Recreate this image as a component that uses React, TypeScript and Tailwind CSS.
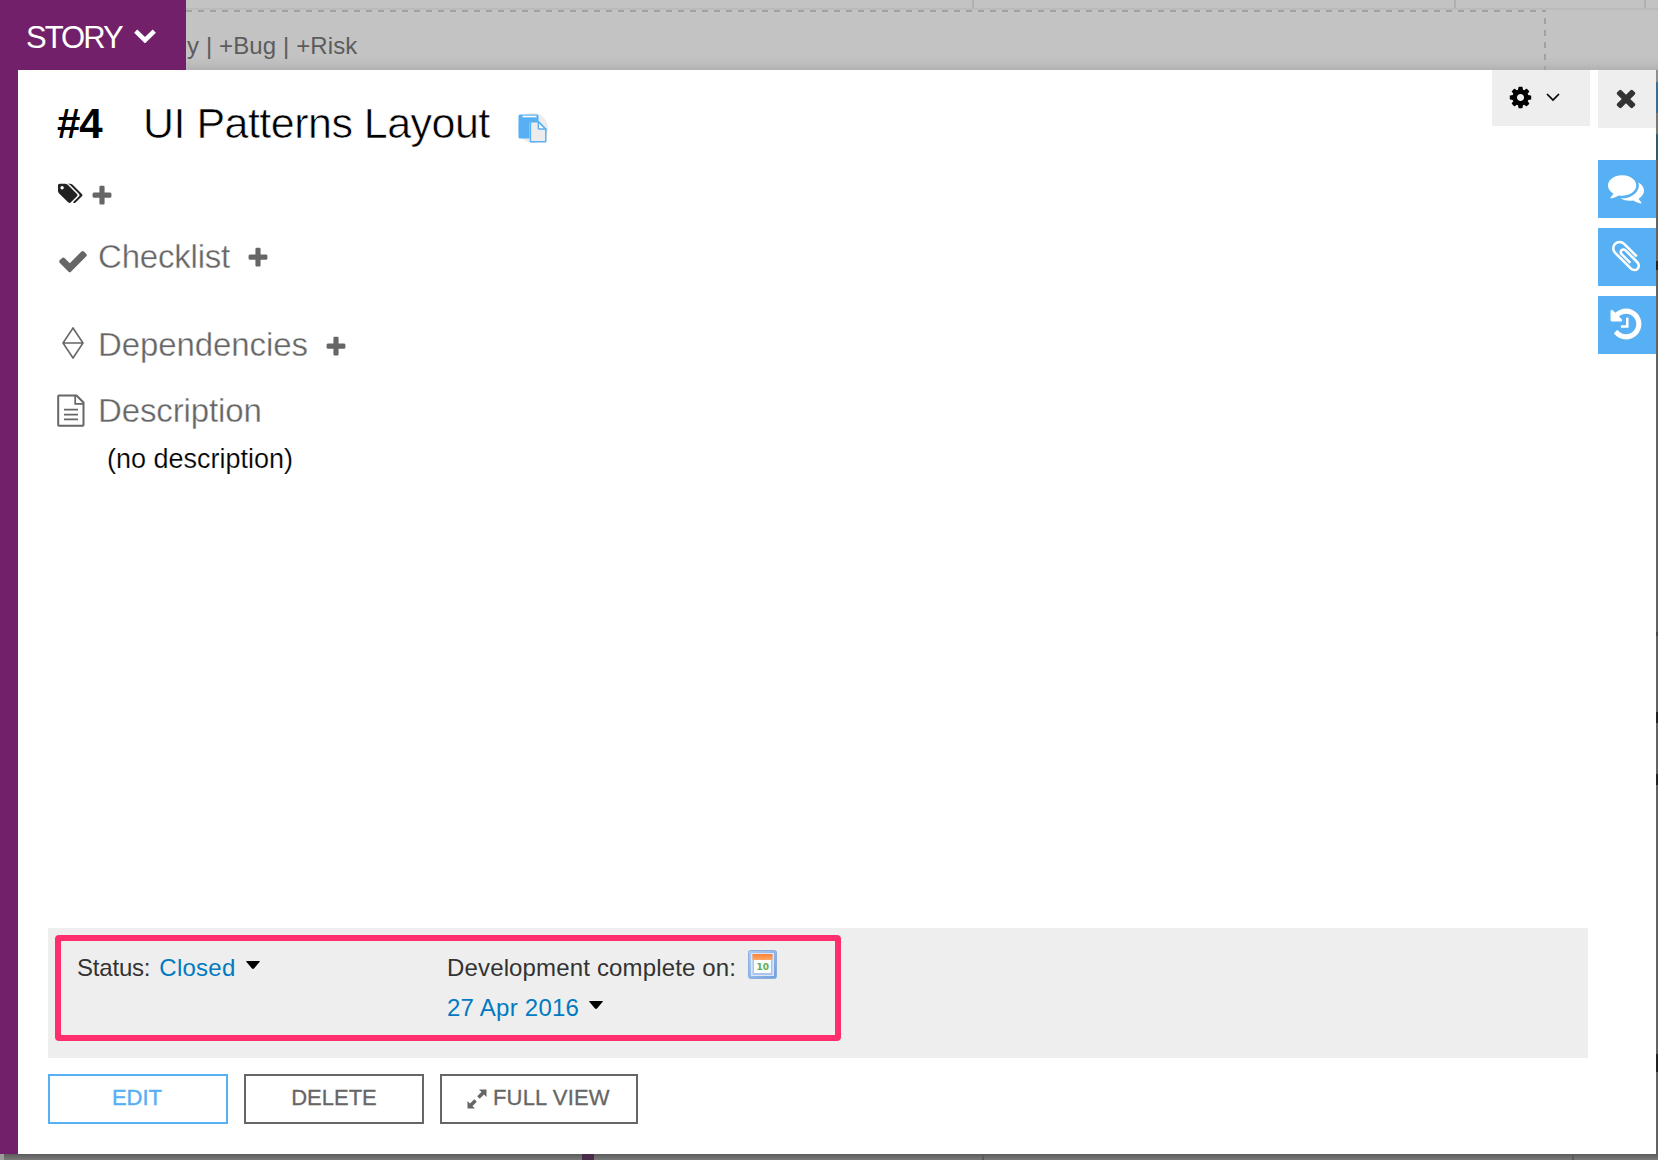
import React from "react";

type IconProps = { d: string; className?: string; viewBox?: string };

function Glyph({ d, className = "", viewBox = "0 0 1792 1792" }: IconProps) {
  return (
    <svg viewBox={viewBox} className={"block shrink-0 fill-current " + className} aria-hidden="true">
      <path d={d} />
    </svg>
  );
}

const PLUS =
  "M1600 736v192q0 40-28 68t-68 28h-416v416q0 40-28 68t-68 28h-192q-40 0-68-28t-28-68v-416h-416q-40 0-68-28t-28-68v-192q0-40 28-68t68-28h416v-416q0-40 28-68t68-28h192q40 0 68 28t28 68v416h416q40 0 68 28t28 68z";
const CHECK =
  "M1671 566q0 40-28 68l-724 724-136 136q-28 28-68 28t-68-28l-136-136-362-362q-28-28-28-68t28-68l136-136q28-28 68-28t68 28l294 295 656-657q28-28 68-28t68 28l136 136q28 28 28 68z";
const TIMES =
  "M1490 1322q0 40-28 68l-136 136q-28 28-68 28t-68-28l-294-294-294 294q-28 28-68 28t-68-28l-136-136q-28-28-28-68t28-68l294-294-294-294q-28-28-28-68t28-68l136-136q28-28 68-28t68 28l294 294 294-294q28-28 68-28t68 28l136 136q28 28 28 68t-28 68l-294 294 294 294q28 28 28 68z";
const COG =
  "M1152 896q0-106-75-181t-181-75-181 75-75 181 75 181 181 75 181-75 75-181zm512-109v222q0 12-8 23t-20 13l-185 28q-19 54-39 91 35 50 107 138 10 12 10 25t-9 23q-27 37-99 108t-94 71q-12 0-26-9l-138-108q-44 23-91 38-16 136-29 186-7 28-36 28h-222q-14 0-24.5-8.5t-11.5-21.5l-28-184q-49-16-90-37l-141 107q-10 9-25 9-14 0-25-11-126-114-165-168-7-10-7-23 0-12 8-23 15-21 51-66.5t54-70.5q-27-50-41-99l-183-27q-13-2-21-12.5t-8-23.5v-222q0-12 8-23t19-13l186-28q14-46 39-92-40-57-107-138-10-12-10-24 0-10 9-23 26-36 98.5-107.5t94.5-71.5q13 0 26 10l138 107q44-23 91-38 16-136 29-186 7-28 36-28h222q14 0 24.5 8.5t11.5 21.5l28 184q49 16 90 37l142-107q9-9 24-9 13 0 25 10 129 119 165 170 7 8 7 22 0 12-8 23-15 21-51 66.5t-54 70.5q26 50 41 98l183 28q13 2 21 12.5t8 23.5z";
const COMMENTS =
  "M1408 768q0 139-94 257t-256.5 186.5-353.5 68.5q-86 0-176-16-124 88-278 128-36 9-86 16h-3q-11 0-20.5-8t-11.5-21q-1-3-1-6.5t.5-6.5 2-6l2.5-5 3.5-5.5 4-5 4.5-5 4-4.5q5-6 23-25t26-29.5 22.5-29 25-38.5 20.5-44q-124-72-195-177t-71-224q0-139 94-257t256.5-186.5 353.5-68.5 353.5 68.5 256.5 186.5 94 257zm384 256q0 120-71 224.5t-195 176.5q10 24 20.5 44t25 38.5 22.5 29 26 29.5 23 25q1 1 4 4.5t4.5 5 4 5 3.5 5.5l2.5 5 2 6 .5 6.5-1 6.5q-3 14-13 22t-22 7q-50-7-86-16-154-40-278-128-90 16-176 16-271 0-472-132 58 4 88 4 161 0 309-45t264-129q125-92 192-212t67-254q0-77-23-152 129 71 204 178t75 230z";
const PAPERCLIP =
  "M1596 1385q0 117-79 196t-196 79q-135 0-235-100l-777-776q-113-115-113-271 0-159 110-270t269-111q158 0 273 113l605 606q10 10 10 22 0 16-30.5 46.5t-46.5 30.5q-13 0-23-10l-606-607q-79-77-181-77-106 0-179 75t-73 181q0 105 76 181l776 777q63 63 145 63 64 0 106-42t42-106q0-82-63-145l-581-581q-26-24-60-24-29 0-48 19t-19 48q0 32 25 59l410 410q10 10 10 22 0 16-31 47t-47 31q-12 0-22-10l-410-410q-63-61-63-149 0-82 57-139t139-57q88 0 149 63l581 581q100 98 100 235z";
const HISTORY =
  "M1664 896q0 156-61 298t-164 245-245 164-298 61q-172 0-327-72.5t-264-204.5q-7-10-6.5-22.5t8.5-20.5l137-138q10-9 25-9 16 2 23 12 73 95 179 147t225 52q104 0 198.5-40.5t163.5-109.5 109.5-163.5 40.5-198.5-40.5-198.5-109.5-163.5-163.5-109.5-198.5-40.5q-98 0-188 35.5t-160 101.5l137 138q31 30 14 69-17 40-59 40h-448q-26 0-45-19t-19-45v-448q0-42 40-59 39-17 69 14l130 129q107-101 244.5-156.5t284.5-55.5q156 0 298 61t245 164 164 245 61 298zm-640-288v448q0 14-9 23t-23 9h-320q-14 0-23-9t-9-23v-64q0-14 9-23t23-9h224v-352q0-14 9-23t23-9h64q14 0 23 9t9 23z";
const TAGS =
  "M576 448q0-53-37.5-90.5t-90.5-37.5-90.5 37.5-37.5 90.5 37.5 90.5 90.5 37.5 90.5-37.5 37.5-90.5zm1067 576q0 53-37 90l-491 492q-39 37-91 37-53 0-90-37l-715-716q-38-37-64.5-101t-26.5-117v-416q0-52 38-90t90-38h416q53 0 117 26.5t102 64.5l715 714q37 39 37 91zm384 0q0 53-37 90l-491 492q-39 37-91 37-36 0-59-14t-53-45l470-470q37-37 37-90 0-52-37-91l-715-714q-38-38-102-64.5t-117-26.5h224q53 0 117 26.5t102 64.5l715 714q37 39 37 91z";

function PasteIcon() {
  return (
    <svg viewBox="0 0 30 30" className="block size-[30px] shrink-0">
      <circle cx="15" cy="15" r="15" fill="#ececec" />
      <path d="M2 1.500h17q1.500 0 1.500 1.500v5h-7q-2 0-2 2v15.500H2q-1.500 0-1.500-1.500V3q0-1.500 1.500-1.500z" fill="#56b0f3" />
      <path d="M4.500 3.500h14" stroke="#fff" strokeWidth="1.600" />
      <path d="M13 8.700h7.600l7.200 7.300v12.200q0 .6-.6.600H13q-.6 0-.6-.6V9.300q0-.6.600-.6z" fill="#ececec" stroke="#56b0f3" strokeWidth="1.500" />
      <path d="M20.300 9v6.200q0 .8.800.8h6.500z" fill="#fff" stroke="#56b0f3" strokeWidth="1.400" />
    </svg>
  );
}

function DocumentIcon() {
  return (
    <svg viewBox="0 0 28 33" className="block h-[33px] w-7 shrink-0" fill="none" stroke="currentColor" strokeWidth="2">
      <path d="M2 1.500h17.500l7 7V31q0 .8-.8.8H2q-.8 0-.8-.8V2.300q0-.8.800-.8z" />
      <path d="M18.200 1.500v8.300h8.300" strokeWidth="1.700" />
      <path d="M7 15.700h14M7 20.700h14M7 25.300h14" strokeWidth="1.700" />
    </svg>
  );
}

function DiamondIcon() {
  return (
    <svg viewBox="0 0 22 32" className="block h-8 w-[22px] shrink-0" fill="none" stroke="currentColor" strokeWidth="1.600">
      <path d="M11 1L21 16 11 31 1 16zM1 16h20" />
    </svg>
  );
}

function CalendarIcon() {
  return (
    <svg viewBox="0 0 29 29" className="block size-[29px] shrink-0">
      <defs>
        <linearGradient id="cal-frame" x1="0" y1="0" x2="1" y2="1">
          <stop offset="0" stopColor="#b4cdf2" />
          <stop offset="1" stopColor="#6f9fdb" />
        </linearGradient>
        <linearGradient id="cal-top" x1="0" y1="0" x2="0" y2="1">
          <stop offset="0" stopColor="#fb8138" />
          <stop offset="1" stopColor="#ffa868" />
        </linearGradient>
      </defs>
      <rect x="0.500" y="0.500" width="28" height="28" rx="2" fill="url(#cal-frame)" stroke="#8aaee2" />
      <rect x="3" y="3" width="23" height="23" fill="#dce8fa" />
      <rect x="4.500" y="4.500" width="20" height="20.500" fill="#a9c5ee" />
      <rect x="6" y="10" width="17" height="13" fill="#fbfdfa" />
      <rect x="4.500" y="4" width="20" height="6" fill="url(#cal-top)" />
      <text x="14.700" y="20.300" textAnchor="middle" fontFamily="DejaVu Sans" fontWeight="bold" fontSize="9" fill="#5fae52">
        10
      </text>
    </svg>
  );
}

function Caret({ className = "" }: { className?: string }) {
  return (
    <svg viewBox="0 0 14 8" className={"block h-2 w-3.5 shrink-0 " + className}>
      <path d="M.5 0h13q.6.500 0 1L8 7.500q-1 .8-2 0L.5 1Q0 .500.500 0z" />
    </svg>
  );
}

function Backdrop() {
  return (
    <div className="flex h-[70px] flex-1 flex-col bg-[linear-gradient(to_bottom,#c3c3c3_80%,#bdbdbd_91%,#b1b1b1)]">
      <div className="flex h-2.5 border-b-2 border-[#bababa]">
        <div className="w-[788px] border-r-2 border-[#b0b0b0]" />
        <div className="w-[482px] border-r-2 border-[#b0b0b0]" />
        <div className="w-[190px] border-r-2 border-[#b0b0b0]" />
      </div>
      <div className="flex h-[60px] w-[1360px] flex-col">
        <div className="h-0.5 bg-[repeating-linear-gradient(to_right,#a2a2a2_0_6px,transparent_6px_12px)]" />
        <div className="flex h-[58px] justify-between">
          <span className="pt-5 pl-px text-[24px] leading-7 tracking-[0.120px] whitespace-pre text-[#5c5c5c]">y | +Bug | +Risk</span>
          <div className="mt-1.5 w-0.5 bg-[repeating-linear-gradient(to_bottom,#a2a2a2_0_6px,transparent_6px_12px)]" />
        </div>
      </div>
    </div>
  );
}

function SideButton({ children }: { children: React.ReactNode }) {
  return (
    <button className="flex h-[58px] w-[58px] items-center justify-center bg-[#56b0f3] pr-0.5 pb-[3px] text-white">{children}</button>
  );
}

function RightEdge() {
  return (
    <div className="flex w-0.5 flex-col bg-[#626262]">
      <div className="h-3 bg-[#8e8e8e]" />
      <div className="h-[31px] bg-[#3c6e92]" />
      <div className="h-[21px] bg-[#777777]" />
      <div className="h-[26px] bg-[#35586f]" />
      <div className="h-[101px]" />
      <div className="h-[9px] bg-[#222222]" />
      <div className="h-[362px]" />
      <div className="h-1 bg-[#454545]" />
      <div className="h-[76px]" />
      <div className="h-[11px] bg-[#222222]" />
      <div className="h-[51px]" />
      <div className="h-[11px] bg-[#222222]" />
      <div className="h-[134px]" />
      <div className="h-0.5 bg-[#45647c]" />
      <div className="h-[46px]" />
      <div className="h-0.5 bg-[#45647c]" />
      <div className="h-[85px]" />
      <div className="h-[18px] bg-[#222222]" />
    </div>
  );
}

export default function App() {
  return (
    <div className="flex h-[1160px] w-[1658px] flex-col overflow-hidden bg-white font-['Liberation_Sans',Arial,sans-serif]">
      <header className="flex h-[70px]">
        <button className="flex w-[186px] items-start bg-[#72206a] pt-5 pl-[26px] text-white">
          <span className="text-[31px] leading-[35px] tracking-[-2px]">STORY</span>
          <svg viewBox="0 0 22 14" className="mt-[9px] ml-3 block h-3.5 w-[22px]" fill="none" stroke="currentColor" strokeWidth="4.600">
            <path d="M1.700 2.200L11 11.200l9.300-9" />
          </svg>
        </button>
        <Backdrop />
      </header>

      <div className="flex h-[1084px]">
        <div className="w-[18px] bg-[#72206a]" />
        <main className="flex flex-1 flex-col bg-white">
          <div className="flex h-[858px] justify-between">
            <div className="flex flex-col pl-[39px] text-[#666666]">
              <div className="mt-[29px] flex h-12 items-start text-black">
                <span className="w-[86px] text-[42px] leading-[50px] font-bold tracking-[-1px]">#4</span>
                <h1 className="text-[43px] leading-12 tracking-[-0.520px] [-webkit-text-stroke:0.600px_white]">UI Patterns Layout</h1>
                <span className="mt-3.5 ml-7">
                  <PasteIcon />
                </span>
              </div>
              <div className="mt-[34px] flex h-6 items-center">
                <Glyph d={TAGS} viewBox="0 0 2048 1792" className="mt-px -ml-px h-[23px] w-[27px] text-[#222222]" />
                <Glyph d={PLUS} className="mt-[5px] ml-[7px] size-[24px]" />
              </div>
              <div className="mt-8 flex h-10 items-center">
                <Glyph d={CHECK} className="mt-2 size-[32px]" />
                <h2 className="ml-[9px] text-[33px] tracking-[-0.200px] [-webkit-text-stroke:0.350px_white]">Checklist</h2>
                <Glyph d={PLUS} className="mt-px ml-4 size-[24px]" />
              </div>
              <div className="mt-12 flex h-10 items-center">
                <span className="-mt-[5px] ml-[5px]">
                  <DiamondIcon />
                </span>
                <h2 className="ml-3.5 text-[33px] tracking-[-0.100px] [-webkit-text-stroke:0.350px_white]">Dependencies</h2>
                <Glyph d={PLUS} className="mt-1 ml-4 size-[24px]" />
              </div>
              <div className="mt-[26px] flex h-10 items-center">
                <span className="-mt-0.5">
                  <DocumentIcon />
                </span>
                <h2 className="ml-[13px] text-[33px] tracking-[-0.120px] [-webkit-text-stroke:0.350px_white]">Description</h2>
              </div>
              <p className="mt-2 ml-[50px] text-[27px] leading-10 text-black [-webkit-text-stroke:0.200px_white]">(no description)</p>
            </div>

            <div className="flex gap-2">
              <button className="flex h-14 w-[98px] items-center bg-[#eeeeee] pb-0.5 pl-4 text-black">
                <Glyph d={COG} className="size-[25px]" />
                <svg viewBox="0 0 14 9" className="ml-[13px] block h-[9px] w-3.5" fill="none" stroke="currentColor" strokeWidth="1.700">
                  <path d="M1 1l6 6 6-6" />
                </svg>
              </button>
              <div className="flex flex-col">
                <button className="mb-8 flex h-[58px] w-[58px] items-center justify-center bg-[#eeeeee] pr-0.5 pb-0.5 text-[#333333]">
                  <Glyph d={TIMES} className="size-[28px]" />
                </button>
                <div className="flex flex-col gap-2.5">
                  <SideButton>
                    <Glyph d={COMMENTS} className="size-[36px]" />
                  </SideButton>
                  <SideButton>
                    <Glyph d={PAPERCLIP} className="size-[36px]" />
                  </SideButton>
                  <SideButton>
                    <Glyph d={HISTORY} className="size-[36px]" />
                  </SideButton>
                </div>
              </div>
            </div>
          </div>

          <section className="ml-[30px] h-[130px] w-[1540px] bg-[#eeeeee] pt-[7px] pl-[7px] text-[24px] leading-10 text-[#333333]">
            <div className="flex h-[106px] w-[786px] rounded-[4px] border-6 border-[#ff2f6e] pl-4">
              <div className="flex h-10 w-[370px] items-start pt-[7px]">
                <span className="tracking-[-0.200px]">Status:</span>
                <span className="ml-[9px] tracking-[0.250px] text-[#017ac1]">Closed</span>
                <Caret className="mt-[13px] ml-[10px] fill-black" />
              </div>
              <div className="flex flex-col pt-[7px]">
                <div className="flex h-10 items-start">
                  <span className="tracking-[0.150px]">Development complete on:</span>
                  <span className="mt-[2px] ml-3">
                    <CalendarIcon />
                  </span>
                </div>
                <div className="flex h-10 items-start">
                  <span className="tracking-[0.250px] text-[#017ac1]">27 Apr 2016</span>
                  <Caret className="mt-[13px] ml-[10px] fill-black" />
                </div>
              </div>
            </div>
          </section>

          <div className="mt-4 ml-[30px] flex gap-4 text-[22px] text-[#666666]">
            <button className="h-[50px] w-[180px] border-2 border-[#56b0f3] pr-0.5 pb-[3px] text-[#56b0f3] [-webkit-text-stroke:0.400px_#56b0f3]">
              EDIT
            </button>
            <button className="h-[50px] w-[180px] border-2 border-[#666666] pb-[3px] [-webkit-text-stroke:0.300px_#666666]">DELETE</button>
            <button className="flex h-[50px] w-[198px] items-center border-2 border-[#666666] pb-[3px] pl-[25px] tracking-[0.150px] [-webkit-text-stroke:0.300px_#666666]">
              <svg viewBox="0 0 20 20" className="mt-[3px] mr-1.5 block size-5 fill-current">
                <path d="M12 .500h7.500V8l-2.500-2.500-4.300 4.300-2.500-2.500L14.500 3zM.500 19.500V12L3 14.500l4.300-4.300 2.500 2.500L5.500 17l2.500 2.500z" />
              </svg>
              FULL VIEW
            </button>
          </div>
        </main>
        <RightEdge />
      </div>

      <footer className="flex h-1.5 bg-[linear-gradient(to_bottom,#5c5c5c,#7a7a7a)]">
        <div className="w-1 bg-[#9c9c9c]" />
        <div className="w-[578px]" />
        <div className="w-3 bg-[#4b2b4a]" />
        <div className="w-[390px] border-r-2 border-[#5c5c5c]" />
        <div className="w-[590px] border-r-2 border-[#5c5c5c]" />
      </footer>
    </div>
  );
}
